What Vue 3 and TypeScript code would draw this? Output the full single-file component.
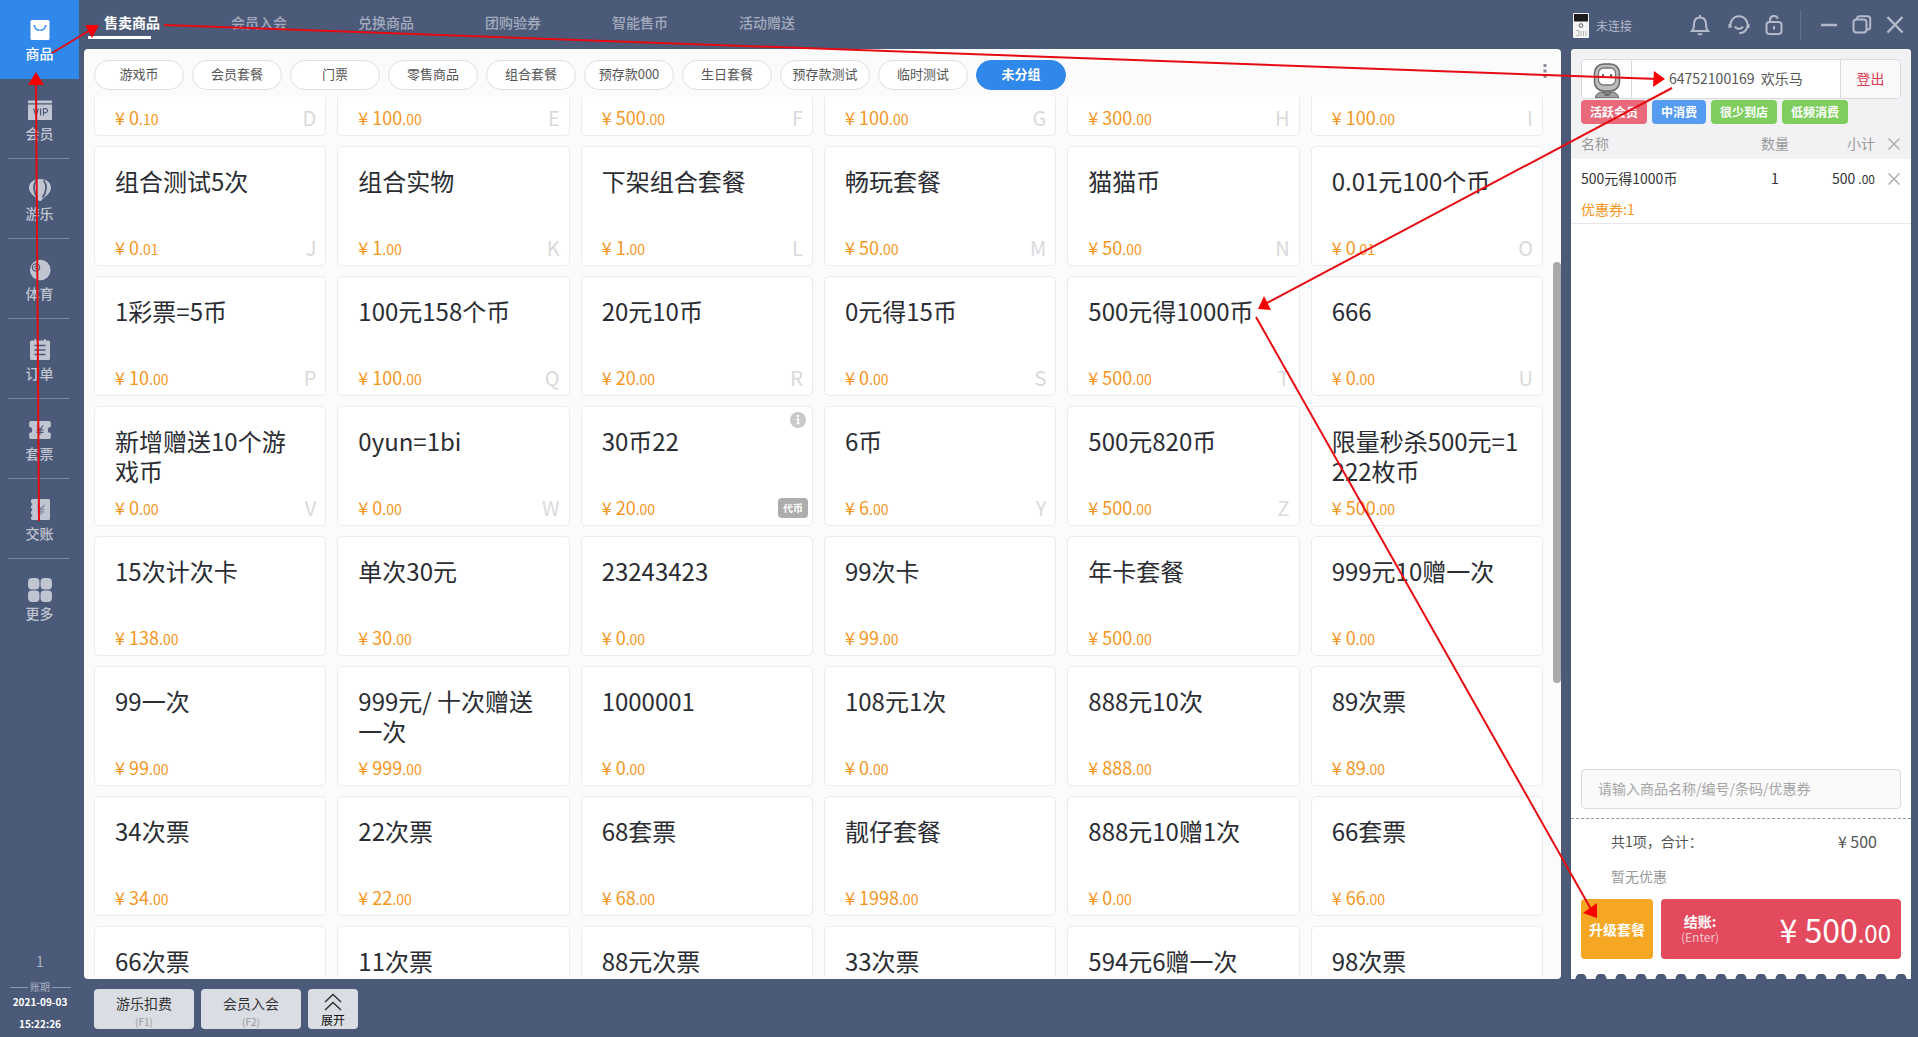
<script setup lang="ts">
import { onMounted, ref } from 'vue'

interface Product {
  name: string
  price?: string
  key?: string
  badge?: string
}

const navItems = [
  { id: 'goods', label: '商品' },
  { id: 'member', label: '会员' },
  { id: 'play', label: '游乐' },
  { id: 'sport', label: '体育' },
  { id: 'order', label: '订单' },
  { id: 'ticket', label: '套票' },
  { id: 'settle', label: '交账' },
  { id: 'more', label: '更多' },
]
const activeNav = ref('goods')

const tabs = ['售卖商品', '会员入会', '兑换商品', '团购验券', '智能售币', '活动赠送']
const activeTab = ref('售卖商品')

const groups = ['游戏币', '会员套餐', '门票', '零售商品', '组合套餐', '预存款000', '生日套餐', '预存款测试', '临时测试', '未分组']
const activeGroup = ref('未分组')

const products: Product[] = [
  { name: '', price: '0.10', key: 'D' },
  { name: '', price: '100.00', key: 'E' },
  { name: '', price: '500.00', key: 'F' },
  { name: '', price: '100.00', key: 'G' },
  { name: '', price: '300.00', key: 'H' },
  { name: '', price: '100.00', key: 'I' },
  { name: '组合测试5次', price: '0.01', key: 'J' },
  { name: '组合实物', price: '1.00', key: 'K' },
  { name: '下架组合套餐', price: '1.00', key: 'L' },
  { name: '畅玩套餐', price: '50.00', key: 'M' },
  { name: '猫猫币', price: '50.00', key: 'N' },
  { name: '0.01元100个币', price: '0.01', key: 'O' },
  { name: '1彩票=5币', price: '10.00', key: 'P' },
  { name: '100元158个币', price: '100.00', key: 'Q' },
  { name: '20元10币', price: '20.00', key: 'R' },
  { name: '0元得15币', price: '0.00', key: 'S' },
  { name: '500元得1000币', price: '500.00', key: 'T' },
  { name: '666', price: '0.00', key: 'U' },
  { name: '新增赠送10个游戏币', price: '0.00', key: 'V' },
  { name: '0yun=1bi', price: '0.00', key: 'W' },
  { name: '30币22', price: '20.00', badge: '代币' },
  { name: '6币', price: '6.00', key: 'Y' },
  { name: '500元820币', price: '500.00', key: 'Z' },
  { name: '限量秒杀500元=1222枚币', price: '500.00' },
  { name: '15次计次卡', price: '138.00' },
  { name: '单次30元', price: '30.00' },
  { name: '23243423', price: '0.00' },
  { name: '99次卡', price: '99.00' },
  { name: '年卡套餐', price: '500.00' },
  { name: '999元10赠一次', price: '0.00' },
  { name: '99一次', price: '99.00' },
  { name: '999元/ 十次赠送一次', price: '999.00' },
  { name: '1000001', price: '0.00' },
  { name: '108元1次', price: '0.00' },
  { name: '888元10次', price: '888.00' },
  { name: '89次票', price: '89.00' },
  { name: '34次票', price: '34.00' },
  { name: '22次票', price: '22.00' },
  { name: '68套票', price: '68.00' },
  { name: '靓仔套餐', price: '1998.00' },
  { name: '888元10赠1次', price: '0.00' },
  { name: '66套票', price: '66.00' },
  { name: '66次票' },
  { name: '11次票' },
  { name: '88元次票' },
  { name: '33次票' },
  { name: '594元6赠一次' },
  { name: '98次票' },
]

const whole = (price: string) => price.split('.')[0]
const cents = (price: string) => '.' + price.split('.')[1]

const tags = [
  { text: '活跃会员', tone: 'red' },
  { text: '中消费', tone: 'blue' },
  { text: '很少到店', tone: 'green' },
  { text: '低频消费', tone: 'green' },
]

const keyword = ref('')

// The list opens scrolled down, with the first row partly hidden.
const scroller = ref<HTMLElement | null>(null)
onMounted(() => {
  if (scroller.value) scroller.value.scrollTop = 81
})
</script>

<template>
  <div class="app" lang="zh-CN">
    <aside class="sidebar">
      <nav class="nav">
        <div v-for="item in navItems" :key="item.id" class="nav-cell">
          <button type="button" class="nav-item" :class="{ active: item.id === activeNav }" @click="activeNav = item.id">
            <svg class="nav-icon" viewBox="0 0 24 24" aria-hidden="true">
              <template v-if="item.id === 'goods'">
                <rect x="2.500" y="2" width="19" height="20" rx="1.500" fill="#fff" />
                <path d="M6.500 8.500c1.500 5 9.500 5 11 0" fill="none" stroke="#2f88ea" stroke-width="1.200" />
                <circle cx="6.500" cy="8" r="1" fill="#2f88ea" /><circle cx="17.500" cy="8" r="1" fill="#2f88ea" />
              </template>
              <template v-else-if="item.id === 'member'">
                <path d="M0 2.500h24v2.700H0zM0 6.500h24V22H0z" fill="currentColor" />
                <path d="M5.500 10.500l2.500 7 2.500-7M12.600 10.500v7M15.500 17.500v-7h1.800a2 2 0 0 1 0 4.200h-1.800" fill="none" stroke="#4c5a79" stroke-width="1.200" />
              </template>
              <template v-else-if="item.id === 'play'">
                <path d="M12 1C5.500 1 1 4.800 1 9.700c0 4.800 4.500 8 8.500 11.300l1.500 2h2l1.500-2c4-3.300 8.500-6.500 8.500-11.300C23 4.800 18.500 1 12 1z" fill="currentColor" />
                <path d="M8.500 2.500C4.500 7 5.500 14 9.500 19.500M15.500 2.500c4 4.500 3 11.500-1 17" fill="none" stroke="#4c5a79" stroke-width="1.800" />
              </template>
              <template v-else-if="item.id === 'sport'">
                <circle cx="12.300" cy="12" r="10.300" fill="currentColor" />
                <circle cx="8" cy="9.500" r="3.600" fill="none" stroke="#4c5a79" stroke-width="1.300" />
                <circle cx="8" cy="9.500" r="1.300" fill="none" stroke="#4c5a79" />
              </template>
              <template v-else-if="item.id === 'order'">
                <path d="M3.500 2.500h3V1H8v1.500h8V1h1.500v1.500h3a1.500 1.500 0 0 1 1.500 1.500v16.500a1.500 1.500 0 0 1-1.500 1.500h-17A1.500 1.500 0 0 1 2 20.500V4a1.500 1.500 0 0 1 1.500-1.500z" fill="currentColor" />
                <path d="M6.500 7.500h11M6.500 12h11M6.500 16.500h11" stroke="#4c5a79" stroke-width="1.500" />
              </template>
              <template v-else-if="item.id === 'ticket'">
                <path d="M3 3h18a1.800 1.800 0 0 1 1.800 1.800V9a3 3 0 0 0 0 6v4.200A1.800 1.800 0 0 1 21 21H3a1.800 1.800 0 0 1-1.800-1.800V15a3 3 0 0 0 0-6V4.800A1.800 1.800 0 0 1 3 3z" fill="currentColor" />
                <path d="M9 7.500l3 4 3-4M12 11.500V17M8.500 11.800h7M8.500 14.300h7" fill="none" stroke="#4c5a79" stroke-width="1.200" />
              </template>
              <template v-else-if="item.id === 'settle'">
                <path d="M4.500 1h16A1.500 1.500 0 0 1 22 2.500v18a1.500 1.500 0 0 1-1.500 1.500h-16A1.500 1.500 0 0 1 3 20.500v-1.700a1.300 1.300 0 0 0 0-2.600v-3a1.300 1.300 0 0 0 0-2.600v-3A1.300 1.300 0 0 0 3 5V2.500A1.500 1.500 0 0 1 4.500 1z" fill="currentColor" />
                <path d="M9.500 7l3.500 4 3.500-4M13 11v6M9.500 11.300h7M9.500 13.800h7" fill="none" stroke="#7d88a2" stroke-width="1.200" />
              </template>
              <template v-else>
                <path d="M4 0h3.500A4 4 0 0 1 11.500 4v3.500a4 4 0 0 1-4 4H4a4 4 0 0 1-4-4V4a4 4 0 0 1 4-4zM16.500 0H20a4 4 0 0 1 4 4v3.500a4 4 0 0 1-4 4h-3.500a4 4 0 0 1-4-4V4a4 4 0 0 1 4-4zM4 12.500h3.500a4 4 0 0 1 4 4V20a4 4 0 0 1-4 4H4a4 4 0 0 1-4-4v-3.500a4 4 0 0 1 4-4zM16.500 12.500H20a4 4 0 0 1 4 4V20a4 4 0 0 1-4 4h-3.500a4 4 0 0 1-4-4v-3.500a4 4 0 0 1 4-4z" fill="currentColor" />
              </template>
            </svg>
            <span>{{ item.label }}</span>
          </button>
        </div>
      </nav>
      <div class="shift">
        <span class="shift-no">1</span>
        <span class="shift-label">账期</span>
        <span class="shift-time">2021-09-03</span>
        <span class="shift-time">15:22:26</span>
      </div>
    </aside>

    <div class="body">
      <header class="topbar">
        <nav class="tabs">
          <button v-for="tab in tabs" :key="tab" type="button" class="tab" :class="{ active: tab === activeTab }" @click="activeTab = tab">
            {{ tab }}
          </button>
        </nav>
        <div class="status">
          <svg width="16" height="26" viewBox="0 0 16 26" aria-hidden="true">
            <rect x="0" y="0" width="16" height="25" rx="1" fill="#f5f5f5" />
            <rect x="1" y="1" width="14" height="7.500" fill="#1c1c1c" />
            <circle cx="8" cy="12.500" r="1.800" fill="none" stroke="#555" />
            <path d="M3 17.500h3v5H3M8 18v5M10.500 18v5M13 18v5" fill="none" stroke="#b5b5b5" stroke-width="1" />
          </svg>
          <span>未连接</span>
        </div>
        <div class="tools">
          <button type="button" class="tool bell" aria-label="通知">
            <svg width="20" height="22" viewBox="0 0 20 22"><path d="M10 1v2M2 17c1.700-1.500 2-3.500 2-6.500C4 6 6.500 3.500 10 3.500s6 2.500 6 7c0 3 .3 5 2 6.500zM8 19.500c1 1 3 1 4 0" /></svg>
          </button>
          <button type="button" class="tool service" aria-label="客服">
            <svg width="22" height="22" viewBox="0 0 22 22"><path d="M2.800 13.500A8.600 8.600 0 1 1 19.200 13.500M1.500 10v4M20.500 10v4M19.200 13.500c-.9 3.300-4 5.500-8 5.800M7 12.500c1.500 3 6.500 3 8 0" /></svg>
          </button>
          <button type="button" class="tool lock" aria-label="锁定">
            <svg width="18" height="22" viewBox="0 0 18 22"><rect x="1.500" y="8" width="15" height="12" rx="3" /><path d="M5 8V6a4 4 0 0 1 7.800-1.300M9 12v3.500" /></svg>
          </button>
          <span class="tool-line"></span>
          <button type="button" class="tool min" aria-label="最小化">
            <svg width="18" height="22" viewBox="0 0 18 22"><path d="M1 11h16" stroke-width="2.500" /></svg>
          </button>
          <button type="button" class="tool restore" aria-label="还原">
            <svg width="20" height="22" viewBox="0 0 20 22"><rect x="1.500" y="5.500" width="13" height="13" rx="3" /><path d="M5 5.500V4.500a2.300 2.300 0 0 1 2.300-2.300h8.400A2.500 2.500 0 0 1 18.200 4.700v8.200a2.500 2.500 0 0 1-2.500 2.500h-1" /></svg>
          </button>
          <button type="button" class="tool close" aria-label="关闭">
            <svg width="18" height="22" viewBox="0 0 18 22"><path d="M1.500 3l15 15.500M16.500 3l-15 15.500" stroke-width="2.500" /></svg>
          </button>
        </div>
      </header>

      <div class="workspace">
        <main class="catalog">
          <div class="groups">
            <button v-for="group in groups" :key="group" type="button" class="group" :class="{ active: group === activeGroup }" @click="activeGroup = group">
              {{ group }}
            </button>
            <button type="button" class="dots" aria-label="更多">
              <svg width="4" height="16" viewBox="0 0 4 16"><path d="M.500 1h3v3h-3zM.500 6.500h3v3h-3zM.500 12h3v3h-3z" fill="#8d9099" /></svg>
            </button>
          </div>
          <div ref="scroller" class="scroller">
            <div class="grid">
              <button v-for="(p, i) in products" :key="i" type="button" class="card">
                <span class="card-name">{{ p.name }}</span>
                <span v-if="p.price" class="card-foot">
                  <span class="price">¥ {{ whole(p.price) }}<small>{{ cents(p.price) }}</small></span>
                  <span v-if="p.key" class="key">{{ p.key }}</span>
                  <span v-if="p.badge" class="badge">{{ p.badge }}</span>
                </span>
                <svg v-if="p.badge" class="info" viewBox="0 0 16 16" aria-hidden="true">
                  <circle cx="8" cy="8" r="8" fill="#c9c9c9" />
                  <path d="M7 3h2v2H7zM6.300 6.300H9V11h.9v1.200H6.300V11h.9V7.500h-.9z" fill="#fff" />
                </svg>
              </button>
            </div>
          </div>
          <div class="thumb"></div>
        </main>

        <section class="order">
          <div class="order-head">
            <div class="member">
              <div class="avatar">
                <svg width="28" height="35" viewBox="0 0 28 35" aria-hidden="true">
                  <path d="M2.500 35c0-3.500 3-5.500 6-6h11c3 .5 6 2.500 6 6z" fill="#a0a0a0" stroke="#555" />
                  <path d="M10 29.500l4 3 4-3M11.500 32.500l2.500-1.500 2.500 1.500" fill="none" stroke="#555" />
                  <rect x="1.500" y="1" width="25" height="27" rx="9" fill="#bdbdbd" stroke="#666" stroke-width="1.500" />
                  <rect x="5.500" y="5" width="17" height="17" rx="5" fill="#fff" stroke="#777" stroke-width="1.300" />
                  <path d="M10 11v3.500M18 11v3.500" stroke="#333" stroke-width="1.500" />
                </svg>
              </div>
              <div class="member-id">64752100169&nbsp; 欢乐马</div>
              <button type="button" class="logout">登出</button>
            </div>
            <div class="tags">
              <span v-for="tag in tags" :key="tag.text" class="tag" :class="tag.tone">{{ tag.text }}</span>
            </div>
          </div>

          <table class="lines">
            <thead>
              <tr>
                <th class="c-name">名称</th>
                <th class="c-qty">数量</th>
                <th class="c-sum">小计</th>
                <th class="c-del">
                  <button type="button" class="del" aria-label="清空"><svg width="12" height="12" viewBox="0 0 12 12"><path d="M.500.500l11 11M11.500.500l-11 11" /></svg></button>
                </th>
              </tr>
            </thead>
            <tbody>
              <tr>
                <td class="c-name">500元得1000币</td>
                <td class="c-qty">1</td>
                <td class="c-sum">500 <small>.00</small></td>
                <td class="c-del">
                  <button type="button" class="del" aria-label="删除"><svg width="12" height="12" viewBox="0 0 12 12"><path d="M.500.500l11 11M11.500.500l-11 11" /></svg></button>
                </td>
              </tr>
              <tr class="coupon">
                <td class="c-name" colspan="4">优惠券:1</td>
              </tr>
            </tbody>
          </table>

          <div class="search">
            <input v-model="keyword" type="text" aria-label="搜索商品" placeholder="请输入商品名称/编号/条码/优惠券" />
          </div>
          <div class="summary">
            <div class="total"><span>共1项，合计：</span><span class="total-sum">¥ 500</span></div>
            <div class="discount">暂无优惠</div>
          </div>
          <div class="actions">
            <button type="button" class="upgrade">升级套餐</button>
            <button type="button" class="pay">
              <span class="pay-label"><strong>结账:</strong><span>(Enter)</span></span>
              <span class="pay-sum">¥ 500<small>.00</small></span>
            </button>
          </div>
          <div class="perforation"></div>
        </section>
      </div>

      <footer class="shortcuts">
        <button type="button" class="shortcut"><span>游乐扣费</span><small>(F1)</small></button>
        <button type="button" class="shortcut"><span>会员入会</span><small>(F2)</small></button>
        <button type="button" class="shortcut expand">
          <svg width="18" height="18" viewBox="0 0 18 18" aria-hidden="true"><path d="M1 9l8-7.500L17 9M1 17l8-7.500L17 17" fill="none" stroke="#333" stroke-width="1.500" /></svg>
          <span>展开</span>
        </button>
      </footer>
    </div>

    <svg class="guide" aria-hidden="true">
      <g stroke="#e60a12" stroke-width="2">
        <path d="M39 521L36 80" /><path d="M52 53L92 29" /><path d="M164 25L1658 79" />
        <path d="M1672 88L1265 304" /><path d="M1256 317L1592 911" />
      </g>
      <g fill="#f60000">
        <path d="M36 72l8 13H28z" /><path d="M85 25l14 0-7 13z" /><path d="M1665 79l-12 8 1-16z" />
        <path d="M1258 309l6-13 7 14z" /><path d="M1597 918l-14-5 14-10z" />
      </g>
    </svg>
  </div>
</template>

<style>
body {
  margin: 0;
  background: #4c5a79;
}
</style>

<style scoped>
.app {
  position: relative;
  display: flex;
  height: 100vh;
  overflow: hidden;
  background: #4c5a79;
  color: #333;
  font-family: "Noto Sans CJK SC", "Noto Sans", sans-serif;
  font-size: 14px;
  line-height: 20px;
}
.app * {
  box-sizing: border-box;
}
button {
  padding: 0;
  border: 0;
  background: none;
  color: inherit;
  font: inherit;
  cursor: pointer;
}
small {
  font-size: 12px;
}

.sidebar {
  flex: none;
  display: flex;
  flex-direction: column;
  justify-content: space-between;
  width: 84px;
  padding-right: 5px;
}
.nav-cell {
  height: 80px;
}
.nav-item {
  display: flex;
  flex-direction: column;
  align-items: center;
  gap: 1px;
  width: 100%;
  height: 79px;
  padding-top: 18px;
  color: #c0c5d1;
  font-weight: 500;
}
.nav-item::after {
  content: '';
  align-self: stretch;
  height: 1px;
  margin: auto 10px 0 8px;
  background: #7b869e;
}
.nav-item.active {
  background: #2f88ea;
  color: #fff;
}
.nav-item.active::after,
.nav-cell:last-child .nav-item::after {
  background: none;
}
.nav-icon {
  width: 24px;
  height: 24px;
}
.shift {
  display: flex;
  flex-direction: column;
  align-items: center;
  padding: 0 0 5px 1px;
  font-size: 10px;
}
.shift-no {
  margin-bottom: 9px;
  color: #a9b1c3;
  font-size: 14px;
}
.shift-label {
  display: flex;
  align-items: center;
  gap: 2px;
  width: 61px;
  line-height: 14px;
  color: #a9b1c3;
}
.shift-label::before,
.shift-label::after {
  content: '';
  flex: 1;
  height: 1px;
  background: #8f99ae;
}
.shift-time {
  line-height: 16px;
  color: #fff;
  font-weight: 700;
}
.shift-time + .shift-time {
  margin-top: 6px;
}

.body {
  flex: 1;
  display: flex;
  flex-direction: column;
  min-width: 0;
}
.topbar {
  flex: none;
  display: flex;
  height: 49px;
  padding-right: 14px;
}
.tabs {
  display: flex;
  flex: 1;
  padding-left: 4px;
}
.tab {
  width: 127px;
  height: 39px;
  padding: 12px 0 0 16px;
  color: #a3abbd;
  font-weight: 500;
  text-align: left;
}
.tab::after {
  content: '';
  display: block;
  width: 63px;
  height: 3px;
  margin: 4px 0 0 -16px;
}
.tab.active {
  color: #fff;
  font-weight: 700;
}
.tab.active::after {
  background: #fff;
}
.status {
  display: flex;
  align-items: center;
  gap: 7px;
  padding-top: 2px;
  color: #b3bac9;
  font-size: 12px;
}
.tools {
  display: flex;
  align-items: center;
  margin-left: 58px;
}
.tool {
  display: flex;
}
.tool svg {
  fill: none;
  stroke: #b3bac9;
  stroke-width: 2;
}
.service {
  margin-left: 18px;
}
.lock {
  margin-left: 15px;
}
.tool-line {
  width: 1px;
  height: 30px;
  margin: 0 19px 0 17px;
  background: #65718c;
}
.restore,
.close {
  margin-left: 14px;
}

.workspace {
  flex: 1;
  display: flex;
  gap: 10px;
  min-height: 0;
  padding-right: 7px;
}
.catalog {
  position: relative;
  flex: 1;
  display: flex;
  flex-direction: column;
  min-width: 0;
  padding: 11px 18px 3px 10px;
  border-radius: 4px;
  background: #fbfbfc;
}
.groups {
  flex: none;
  display: flex;
  gap: 8px;
}
.group {
  width: 90px;
  height: 30px;
  padding-bottom: 2px;
  border: 1px solid #dcdfe6;
  border-radius: 15px;
  background: #fff;
  color: #555;
  font-size: 13px;
}
.group.active {
  border-color: #2f88ea;
  background: #2f88ea;
  color: #fff;
  font-weight: 700;
}
.dots {
  display: flex;
  height: 16px;
  margin: 3px -4px 0 auto;
}
.scroller {
  flex: 1;
  min-height: 0;
  margin-top: 7px;
  overflow: hidden;
}
.grid {
  display: grid;
  grid-template-columns: repeat(6, 1fr);
  grid-auto-rows: 120px;
  gap: 10px 11px;
}
.card {
  position: relative;
  display: flex;
  flex-direction: column;
  justify-content: space-between;
  padding: 19px 9px 4px 20px;
  border: 1px solid #ebebee;
  border-radius: 5px;
  background: #fff;
  text-align: left;
}
.card:nth-last-child(-n + 6) {
  justify-content: flex-start;
}
.card-name {
  min-height: 30px;
  padding-right: 11px;
  color: #2b2d33;
  font-size: 24px;
  line-height: 30px;
  word-break: break-all;
}
.card-foot {
  display: flex;
  align-items: center;
  justify-content: space-between;
  height: 26px;
}
.price {
  color: #f5961e;
  font-size: 18px;
  line-height: 26px;
}
.price small {
  font-size: 14px;
}
.key {
  color: #d9d9dc;
  font-size: 20px;
}
.badge {
  width: 30px;
  height: 20px;
  margin-right: -5px;
  border-radius: 4px;
  background: #adadad;
  color: #fff;
  font-size: 10px;
  font-weight: 700;
  text-align: center;
}
.info {
  position: absolute;
  top: 5px;
  right: 6px;
  width: 16px;
  height: 16px;
}
.thumb {
  position: absolute;
  top: 213px;
  right: 0;
  width: 8px;
  height: 421px;
  border-radius: 4px;
  background: #a8a9ab;
}

.order {
  flex: none;
  display: flex;
  flex-direction: column;
  width: 340px;
  border-radius: 4px 4px 0 0;
  background: #fff;
  overflow: hidden;
}
.order-head {
  padding: 10px 10px 0;
  background: #f2f2f5;
}
.member {
  display: flex;
  height: 40px;
  border: 1px solid #d9dbe1;
  border-radius: 4px;
  background: #fff;
  line-height: 36px;
}
.avatar {
  display: flex;
  align-items: flex-end;
  justify-content: center;
  width: 50px;
  border-right: 1px solid #d9dbe1;
}
.member-id {
  flex: 1;
  padding-left: 37px;
  color: #555;
}
.logout {
  width: 60px;
  padding-bottom: 2px;
  border-left: 1px solid #d9dbe1;
  border-radius: 0 4px 4px 0;
  background: #f9f9fa;
  color: #d93a50;
}
.tags {
  display: flex;
  gap: 5px;
  padding-top: 1px;
}
.tag {
  padding: 0 9px;
  border-radius: 4px;
  color: #fff;
  font-size: 12px;
  font-weight: 700;
  line-height: 24px;
}
.tag.red {
  background: #e7697b;
}
.tag.blue {
  background: #559cf0;
}
.tag.green {
  background: #80cd5f;
}
.lines {
  width: 100%;
  border-collapse: collapse;
  table-layout: fixed;
}
.lines th {
  height: 35px;
  padding: 2px 0 0;
  background: #f2f2f5;
  color: #999;
  font-weight: 400;
}
.lines td {
  height: 38px;
  padding: 0;
}
.lines .c-name {
  padding-left: 10px;
  text-align: left;
}
.lines .c-qty {
  width: 60px;
  text-align: center;
}
.lines .c-sum {
  width: 70px;
  text-align: right;
}
.lines .c-del {
  width: 36px;
  padding-right: 11px;
  text-align: right;
}
.del {
  display: inline-flex;
  padding-bottom: 2px;
  vertical-align: middle;
}
.del svg {
  fill: none;
  stroke: #aaa;
  stroke-width: 1.4;
}
.lines .coupon td {
  height: 26px;
  padding-bottom: 2px;
  border-bottom: 1px solid #e8e8ec;
  color: #f5961e;
}
.search {
  margin-top: auto;
  padding: 0 10px 9px;
}
.search input {
  display: block;
  width: 100%;
  height: 40px;
  padding: 0 16px 2px;
  border: 1px solid #d9dbe1;
  border-radius: 4px;
  outline: 0;
  background: #fafafa;
  color: #333;
  font: inherit;
}
.search input::placeholder {
  color: #a5a5a5;
}
.summary {
  height: 81px;
  padding: 12px 34px 0 40px;
  border-top: 1px dashed #999;
}
.total {
  display: flex;
  justify-content: space-between;
  color: #555;
}
.total-sum {
  font-size: 16px;
}
.discount {
  margin-top: 15px;
  color: #999;
}
.actions {
  display: flex;
  gap: 8px;
  padding: 0 10px 15px;
}
.upgrade,
.pay {
  height: 60px;
  border-radius: 4px;
  color: #fff;
}
.upgrade {
  width: 72px;
  background: #f5a623;
  font-weight: 700;
}
.pay {
  flex: 1;
  display: flex;
  align-items: center;
  justify-content: space-between;
  padding: 0 10px 0 20px;
  background: #e34a5e;
}
.pay-label {
  display: flex;
  flex-direction: column;
  align-items: center;
  font-size: 12px;
  line-height: 16px;
}
.pay-label span {
  color: #f6c5cc;
}
.pay-label strong {
  font-size: 14px;
}
.pay-sum {
  font-size: 32px;
  line-height: 48px;
}
.pay-sum small {
  font-size: 24px;
  line-height: 24px;
}
.perforation {
  height: 5px;
  background: radial-gradient(circle at 10px 5px, #4c5a79 5px, #fff 6px) 0 0 / 20px 5px;
}

.shortcuts {
  flex: none;
  display: flex;
  gap: 7px;
  height: 58px;
  padding: 10px 10px 8px;
}
.shortcut {
  display: flex;
  flex-direction: column;
  align-items: center;
  gap: 2px;
  width: 100px;
  padding-top: 4px;
  border-radius: 4px;
  background: #dadde4;
}
.shortcut small {
  color: #999;
  font-size: 10px;
  line-height: 14px;
}
.expand {
  width: 50px;
  color: #111;
  font-size: 12px;
  line-height: 14px;
}

.guide {
  position: absolute;
  inset: 0;
  width: 100%;
  height: 100%;
  pointer-events: none;
}
</style>
